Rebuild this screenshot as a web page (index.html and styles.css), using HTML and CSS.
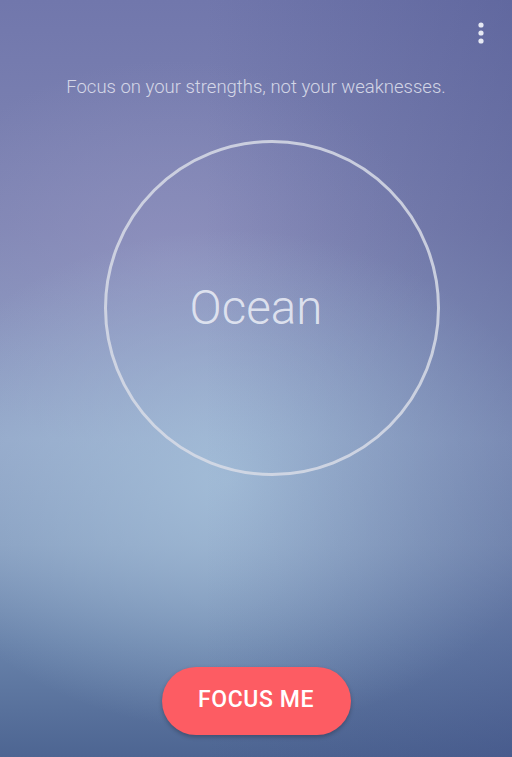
FILE: index.html
```html
<!DOCTYPE html>
<html>
<head>
<meta charset="utf-8">
<link rel="stylesheet" href="styles.css">
</head>
<body>
<div class="screen">
  <div class="topbar">
    <svg class="menu" width="10" height="24" viewBox="0 0 10 24"><circle cx="5" cy="4" r="2.6" fill="#e6e9f3"/><circle cx="5" cy="12" r="2.6" fill="#e6e9f3"/><circle cx="5" cy="20" r="2.6" fill="#e6e9f3"/></svg>
  </div>
  <p class="quote">Focus on your strengths, not your weaknesses.</p>
  <div class="stage">
    <div class="ring"></div>
    <span class="word">Ocean</span>
  </div>
  <div class="bottom">
    <button class="cta">FOCUS ME</button>
  </div>
</div>
</body>
</html>
```
FILE: styles.css
```css
html, body {
  margin: 0;
  padding: 0;
}
body {
  width: 512px;
  height: 757px;
  overflow: hidden;
  font-family: Roboto, "Noto Sans", sans-serif;
}
.screen {
  width: 512px;
  height: 757px;
  display: flex;
  flex-direction: column;
  background:
    radial-gradient(ellipse 330px 250px at 230px 480px, rgba(165,192,218,0.85), rgba(165,192,218,0) 100%),
    radial-gradient(ellipse 260px 200px at 170px 260px, rgba(150,150,195,0.55), rgba(150,150,195,0) 100%),
    linear-gradient(180deg, #7177ac 0%, #8086b4 30%, #93a6c8 58%, #869dbf 72%, #6882aa 85%, #4d6592 100%);
  position: relative;
}
.screen::after {
  content: "";
  position: absolute;
  inset: 0;
  background: linear-gradient(90deg, rgba(60,70,130,0) 40%, rgba(60,70,130,0.3) 100%);
  pointer-events: none;
}
.topbar {
  height: 64px;
  display: flex;
  justify-content: flex-end;
  align-items: flex-start;
  padding: 21px 26px 0 0;
  box-sizing: border-box;
  position: relative;
  z-index: 1;
}
.quote {
  margin: 13px 0 0;
  text-align: center;
  color: rgba(235,236,245,0.82);
  font-size: 18.5px;
  line-height: 21px;
  font-weight: 300;
  position: relative;
  z-index: 1;
}
.stage {
  margin-top: 39px;
  height: 342px;
  display: flex;
  justify-content: center;
  align-items: center;
  position: relative;
  z-index: 1;
}
.ring {
  width: 330px;
  height: 330px;
  border: 3px solid rgba(216,220,230,0.85);
  border-radius: 50%;
  margin-left: 32px;
}
.word {
  position: absolute;
  left: 0;
  right: 0;
  top: 0;
  bottom: 0;
  display: flex;
  justify-content: center;
  align-items: center;
  color: rgba(232,235,244,0.9);
  font-size: 47.5px;
  font-weight: 300;
}
.bottom {
  margin-top: auto;
  display: flex;
  justify-content: center;
  padding: 0 0 22px 0;
  position: relative;
  z-index: 1;
}
.cta {
  width: 189px;
  height: 68px;
  border: none;
  border-radius: 34px;
  background: #fd5c63;
  color: #fff;
  font-family: Roboto, sans-serif;
  font-size: 23px;
  font-weight: 500;
  letter-spacing: 0.6px;
  padding: 0 0 3px;
  box-shadow: 0 2px 4px rgba(0,0,0,0.25);
}
```
